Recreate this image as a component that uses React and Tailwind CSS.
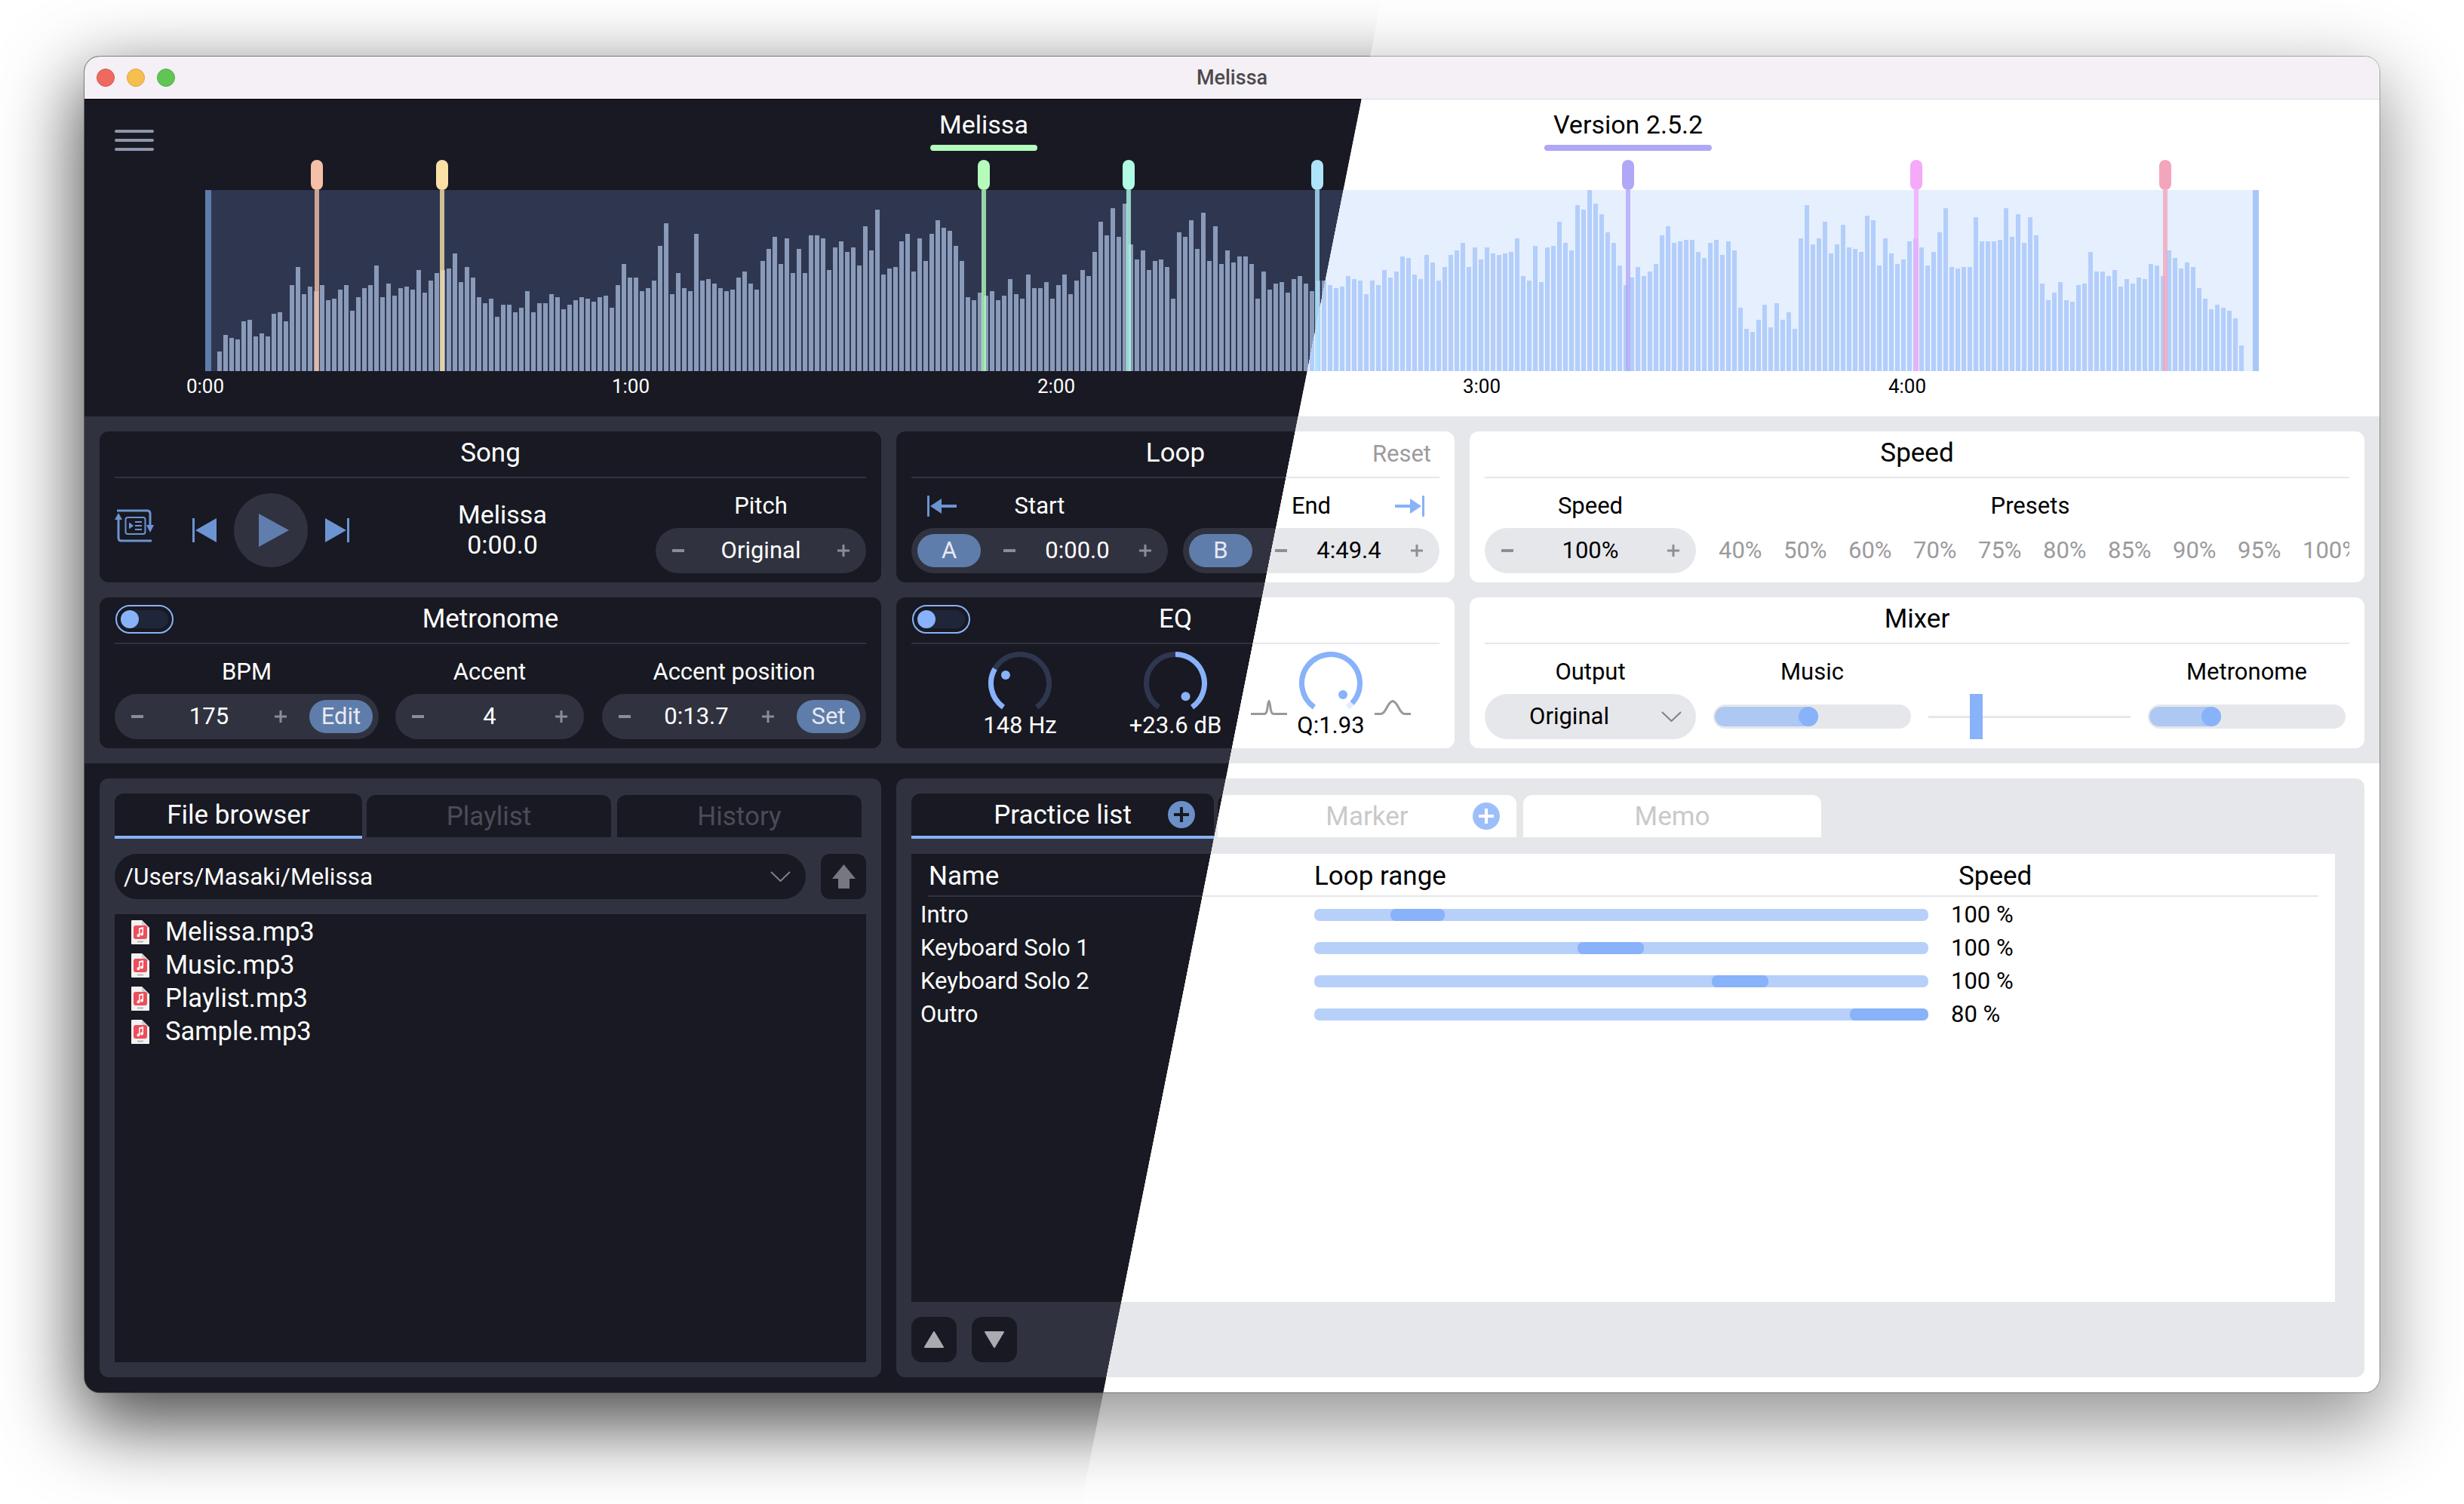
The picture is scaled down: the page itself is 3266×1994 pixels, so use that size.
import React from 'react';

const dark = {
  stage: 'shadow-[0_36px_100px_8px_rgba(0,0,0,0.7),0_0_0_1px_rgba(0,0,0,0.4)]',
  titleLine: 'border-[#000000]',
  base: 'bg-[#181922] text-white',
  inner: 'bg-[#181922]',
  section: 'bg-[#30323f]',
  rule: 'border-[#30323f]',
  burger: 'bg-[#8e96ab]',
  button: 'bg-[#5f7dab] text-[#e8e9ef]',
  mutedTab: 'text-[#4a4c58]',
  muted: 'text-[#77798a]',
  sign: '#8b8c94',
  icon: '#6c94d2',
  playBg: '#30323f',
  playFg: '#5f7eae',
  wave: '#2f3750',
  bar: '#8a9ab9',
  edge: '#5d7cad',
  track: '#2e3650',
  toggleTrack: 'bg-[#20263a]',
  addBg: '#6b8fc7',
  addFg: '#181922',
  upArrow: '#77777f',
  triangle: '#aaabb0',
};

const light = {
  stage: 'shadow-[0_36px_100px_8px_rgba(0,0,0,0.42),0_0_0_1px_rgba(0,0,0,0.28)]',
  titleLine: 'border-[#dcdcdf]',
  base: 'bg-white text-black',
  inner: 'bg-white',
  section: 'bg-[#e6e7eb]',
  rule: 'border-[#e6e7eb]',
  burger: 'bg-[#8e96ab]',
  button: 'bg-[#88b2f9] text-white',
  mutedTab: 'text-[#c9c9cb]',
  muted: 'text-[#9b9b9d]',
  sign: '#8f8f92',
  icon: '#88b2f9',
  playBg: '#e6e7eb',
  playFg: '#88b2f9',
  wave: '#e5effe',
  bar: '#b3cefa',
  edge: '#a8c7f8',
  track: '#e3edfd',
  toggleTrack: 'bg-[#e5effe]',
  addBg: '#9dbff9',
  addFg: '#ffffff',
  upArrow: '#999999',
  triangle: '#888888',
};

// bar heights of the waveform, one bar every 8px
const BARS = [
  26, 48, 44, 42, 66, 68, 46, 50, 46, 76, 78, 66, 114, 138, 102, 112, 106, 114, 94, 96, 108, 114, 80, 98, 110, 114, 140, 98, 116, 100,
  110, 112, 108, 134, 104, 120, 130, 134, 136, 156, 118, 138, 124, 98, 90, 96, 72, 88, 88, 78, 84, 106, 78, 90, 90, 102, 98, 82, 88, 94,
  98, 96, 92, 98, 100, 84, 114, 142, 124, 124, 106, 110, 120, 166,
  196, 102, 130, 110, 106, 182, 120, 122, 116, 110, 106, 108, 124, 132, 116, 108, 146, 162, 178, 142, 176, 130, 162, 130, 180, 180,
  176, 134, 164, 172, 158, 164, 140, 192, 160, 214, 128, 136, 138, 172, 182, 132, 176, 146, 182, 200, 190, 186, 166, 146, 98, 94, 104, 100, 106, 94,
  100, 122, 102, 96, 128, 110, 110, 118, 96, 114, 128, 102, 120, 134, 126, 158, 198, 180, 216, 178, 222, 168, 148,
  160, 134, 146, 148, 138, 96, 184, 178, 200, 162, 210, 146, 192, 142, 160, 144, 152, 152, 142, 96, 132, 108, 116, 118, 104, 122, 126, 116, 106, 120,
  120, 114, 110, 112, 126, 122, 120, 102, 120, 114, 134, 124, 132, 152, 150, 128, 122, 154, 144, 120, 138, 154, 160, 170, 138, 164, 148, 164, 156, 154,
  156, 158, 176, 126, 120, 166, 118, 164, 166, 198, 170, 160, 220, 214, 240, 222, 208, 184, 170, 140, 114, 124, 138, 126, 132, 142, 180, 192, 170, 172,
  174, 174, 158, 150, 170, 174, 154, 172, 160,
  84, 56, 52, 68, 88, 58, 90, 68, 78, 56, 176, 220, 168, 176, 198, 156, 168, 194, 164, 162, 158, 206, 200, 140, 176, 156, 142, 148, 172, 176,
  164, 140, 158, 184, 216, 138, 136, 138, 138, 204, 172, 172, 172, 174, 216, 178, 208, 170, 204, 180, 116, 94, 104, 118, 94, 92, 114, 116, 158, 132,
  132, 126, 134, 112, 122, 116, 124, 122, 142, 140, 126, 160, 150, 136, 144, 138, 110, 96, 82, 88, 84, 80, 70, 34,
];

const MARKERS = [
  { at: 420, handle: '#f5c0a7' },
  { at: 586, handle: '#f9e0a5' },
  { at: 1304, handle: '#b4fbbc', label: 'Melissa' },
  { at: 1496, handle: '#b0fbe4' },
  { at: 1746, handle: '#aee4fb' },
  { at: 2158, handle: '#b1a7f7', label: 'Version 2.5.2' },
  { at: 2540, handle: '#f4a9f9' },
  { at: 2870, handle: '#f3a5bc' },
];

const TICKS = ['0:00', '1:00', '2:00', '3:00', '4:00'];
const PRESETS = ['40%', '50%', '60%', '70%', '75%', '80%', '85%', '90%', '95%', '100%'];
const FILES = ['Melissa.mp3', 'Music.mp3', 'Playlist.mp3', 'Sample.mp3'];
const PRACTICE = [
  { name: 'Intro', left: 101, width: 72, speed: '100 %' },
  { name: 'Keyboard Solo 1', left: 349, width: 88, speed: '100 %' },
  { name: 'Keyboard Solo 2', left: 527, width: 75, speed: '100 %' },
  { name: 'Outro', left: 710, width: 104, speed: '80 %' },
];

function Minus({ t }) {
  return (
    <svg width="16" height="16" viewBox="0 0 16 16" className="shrink-0">
      <rect y="6" width="16" height="4" fill={t.sign} />
    </svg>
  );
}

function Plus({ t }) {
  return (
    <svg width="16" height="16" viewBox="0 0 16 16" className="shrink-0">
      <path d="M6.5 0h3v6.5H16v3H9.5V16h-3V9.5H0v-3h6.5z" fill={t.sign} />
    </svg>
  );
}

function Chevron({ stroke = '#808085' }) {
  return (
    <svg width="27" height="14" viewBox="0 0 27 14" className="shrink-0">
      <path d="M1 1l12.5 12L26 1" fill="none" stroke={stroke} strokeWidth="2" />
    </svg>
  );
}

function PillButton({ t, label }) {
  return (
    <div className={`flex h-[44px] w-[84px] shrink-0 items-center justify-center rounded-[22px] ${t.button}`}>{label}</div>
  );
}

function Stepper({ t, value, before, after }) {
  return (
    <div className={`flex h-[60px] items-center rounded-[30px] ${t.section} ${before ? 'pl-[8px]' : 'pl-[22px]'} ${after ? 'pr-[8px]' : 'pr-[22px]'}`}>
      {before && <div className="mr-[30px]">{before}</div>}
      <Minus t={t} />
      <div className="flex-1 text-center">{value}</div>
      <Plus t={t} />
      {after && <div className="ml-[30px]">{after}</div>}
    </div>
  );
}

function Toggle({ t }) {
  return (
    <div className="ml-[1px] flex h-[38px] w-[77px] items-center rounded-full border-2 border-[#88b2f9] p-[5px]">
      <div className={`h-[24px] w-full rounded-full ${t.toggleTrack}`}>
        <div className="h-[24px] w-[24px] rounded-full bg-[#88b2f9]" />
      </div>
    </div>
  );
}

function Panel({ t, title, left, right, children }) {
  return (
    <div className={`h-[200px] rounded-[12px] px-[20px] ${t.inner}`}>
      <div className={`grid h-[62px] grid-cols-[1fr_auto_1fr] items-center border-b-2 pb-[2px] text-[35px] ${t.rule}`}>
        <div>{left}</div>
        <div className="text-center">{title}</div>
        <div className="text-right">{right}</div>
      </div>
      {children}
    </div>
  );
}

function Field({ label, className, children }) {
  return (
    <div className={`pt-[19px] ${className}`}>
      <div className="mb-[11px] h-[36px] text-center leading-[36px]">{label}</div>
      {children}
    </div>
  );
}

function RepeatIcon({ color }) {
  return (
    <svg width="54" height="44" viewBox="0 0 54 44" className="mb-[12px] shrink-0">
      <path d="M3 2h40q4 0 4 4v16M5 12v26q0 4 4 4h40" fill="none" stroke={color} strokeWidth="3" />
      <path d="M0 14l5-9 5 9zM42 21h10l-5 10z" fill={color} />
      <rect x="14.5" y="11" width="26" height="22" rx="3" fill="none" stroke={color} strokeWidth="2" />
      <path d="M19 17.5l6 4.5-6 4.5z" fill={color} />
      <path d="M27 17h9M27 22h9M27 27h9" stroke={color} strokeWidth="2" />
    </svg>
  );
}

function SkipIcon({ color, flip }) {
  return (
    <svg width="32" height="32" viewBox="0 0 32 32" className={`shrink-0 ${flip ? '-scale-x-100' : ''}`}>
      <rect width="3" height="32" fill={color} />
      <path d="M32 0v32L4 16z" fill={color} />
    </svg>
  );
}

function SongPanel({ t }) {
  return (
    <Panel t={t} title="Song">
      <div className="flex h-[138px] items-center">
        <RepeatIcon color={t.icon} />
        <div className="ml-[49px] flex items-center">
          <SkipIcon color={t.icon} />
          <div className="mx-[23px] flex h-[98px] w-[98px] items-center justify-center rounded-full" style={{ background: t.playBg }}>
            <svg width="40" height="44" viewBox="0 0 40 44" className="ml-[8px]">
              <path d="M0 0l40 22L0 44z" fill={t.playFg} />
            </svg>
          </div>
          <SkipIcon color={t.icon} flip />
        </div>
        <div className="flex-1 pb-[2px] text-center text-[34px] leading-[40px]">
          <div>Melissa</div>
          <div>0:00.0</div>
        </div>
        <Field label="Pitch" className="w-[279px] self-start">
          <Stepper t={t} value="Original" />
        </Field>
      </div>
    </Panel>
  );
}

function MetronomePanel({ t }) {
  return (
    <Panel t={t} title="Metronome" left={<Toggle t={t} />}>
      <div className="flex">
        <Field label="BPM" className="w-[350px]">
          <Stepper t={t} value="175" after={<PillButton t={t} label="Edit" />} />
        </Field>
        <Field label="Accent" className="ml-[22px] w-[250px]">
          <Stepper t={t} value="4" />
        </Field>
        <Field label="Accent position" className="ml-[24px] w-[350px]">
          <Stepper t={t} value="0:13.7" after={<PillButton t={t} label="Set" />} />
        </Field>
      </div>
    </Panel>
  );
}

function LoopEndIcon({ color, flip }) {
  return (
    <svg width="39" height="28" viewBox="0 0 39 28" className={`block ${flip ? '-scale-x-100' : ''}`}>
      <rect width="3" height="28" rx="1" fill={color} />
      <path d="M4 14l15-10v8h20v4H19v8z" fill={color} />
    </svg>
  );
}

function LoopPanel({ t }) {
  return (
    <Panel t={t} title="Loop" right={<span className={`pr-[11px] text-[31px] ${t.muted}`}>Reset</span>}>
      <div className="flex gap-[20px]">
        <div className="w-[340px] pt-[19px]">
          <div className="mb-[11px] grid h-[36px] grid-cols-[1fr_auto_1fr] items-center leading-[36px]">
            <div className="pl-[21px]"><LoopEndIcon color={t.icon} /></div>
            <div>Start</div>
            <div />
          </div>
          <Stepper t={t} value="0:00.0" before={<PillButton t={t} label="A" />} />
        </div>
        <div className="w-[340px] pt-[19px]">
          <div className="mb-[11px] grid h-[36px] grid-cols-[1fr_auto_1fr] items-center leading-[36px]">
            <div />
            <div>End</div>
            <div className="flex justify-end pr-[20px]"><LoopEndIcon color={t.icon} flip /></div>
          </div>
          <Stepper t={t} value="4:49.4" before={<PillButton t={t} label="B" />} />
        </div>
      </div>
    </Panel>
  );
}

function polar(angle) {
  const rad = (angle * Math.PI) / 180;
  return [42 + 38.5 * Math.sin(rad), 42 - 38.5 * Math.cos(rad)];
}

function arc(from, to) {
  const [x0, y0] = polar(from);
  const [x1, y1] = polar(to);
  return `M${x0} ${y0}A38.5 38.5 0 ${to - from > 180 ? 1 : 0} 1 ${x1} ${y1}`;
}

function Knob({ t, from, to, dot }) {
  const rad = (dot * Math.PI) / 180;
  return (
    <svg width="84" height="84" viewBox="0 0 84 84" className="shrink-0">
      <path d={arc(-145, 145)} fill="none" stroke={t.track} strokeWidth="7" />
      <path d={arc(from, to)} fill="none" stroke="#88b2f9" strokeWidth="7" />
      <circle cx={42 + 22 * Math.sin(rad)} cy={42 - 22 * Math.cos(rad)} r="6" fill="#88b2f9" />
    </svg>
  );
}

function FilterShape({ narrow }) {
  return (
    <svg width="48" height="20" viewBox="0 0 48 20" className="shrink-0 self-end">
      <path
        d={narrow ? 'M0 18.5h18q3 0 4-8t2-9q1 1 2 9t4 8h18' : 'M0 18.5h8q4 0 8-8t8-9q4 1 8 9t8 8h8'}
        fill="none"
        stroke="#999999"
        strokeWidth="3"
      />
    </svg>
  );
}

function EqPanel({ t }) {
  return (
    <Panel t={t} title="EQ" left={<Toggle t={t} />}>
      <div className="flex justify-center pt-[10px]">
        <div className="flex w-[206px] flex-col items-center">
          <Knob t={t} from={-145} to={-60} dot={-60} />
          <div className="-mt-[4px] leading-[36px]">148 Hz</div>
        </div>
        <div className="flex w-[206px] flex-col items-center">
          <Knob t={t} from={0} to={145} dot={142} />
          <div className="-mt-[4px] leading-[36px]">+23.6 dB</div>
        </div>
        <div className="flex w-[206px] flex-col items-center">
          <div className="-mx-[3px] flex gap-[16px]">
            <FilterShape narrow />
            <Knob t={t} from={-145} to={133} dot={133} />
            <FilterShape />
          </div>
          <div className="-mt-[4px] leading-[36px]">Q:1.93</div>
        </div>
      </div>
    </Panel>
  );
}

function SpeedPanel({ t }) {
  return (
    <Panel t={t} title="Speed">
      <div className="flex gap-[20px]">
        <Field label="Speed" className="w-[280px]">
          <Stepper t={t} value="100%" />
        </Field>
        <Field label="Presets" className="min-w-0 flex-1">
          <div className={`flex h-[60px] items-center gap-[29px] overflow-hidden pl-[10px] ${t.muted}`}>
            {PRESETS.map((p) => (
              <div key={p} className="w-[57px] shrink-0 whitespace-nowrap">{p}</div>
            ))}
          </div>
        </Field>
      </div>
    </Panel>
  );
}

function Fader({ t, fill }) {
  return (
    <div className={`flex h-[32px] items-center rounded-full px-[2px] ${t.section}`}>
      <div className={`flex h-[26px] justify-end rounded-full bg-[#adc8f2] ${fill}`}>
        <div className="h-[26px] w-[26px] rounded-full bg-[#88b2f9]" />
      </div>
    </div>
  );
}

function MixerPanel({ t }) {
  return (
    <Panel t={t} title="Mixer">
      <div className="flex gap-[23px]">
        <Field label="Output" className="w-[280px]">
          <div className={`flex h-[60px] items-center rounded-[30px] ${t.section}`}>
            <div className="flex-1 text-center">Original</div>
            <div className="ml-[10px] mr-[19px]"><Chevron /></div>
          </div>
        </Field>
        <Field label="Music" className="w-[262px]">
          <div className="flex h-[60px] items-center"><div className="w-full"><Fader t={t} fill="w-[137px]" /></div></div>
        </Field>
        <div className="relative mt-[66px] flex h-[60px] w-[268px] items-center">
          <div className={`h-[3px] w-full ${t.section}`} />
          <div className="absolute left-[55px] top-0 h-[60px] w-[17px] bg-[#88b2f9]" />
        </div>
        <Field label="Metronome" className="w-[262px]">
          <div className="flex h-[60px] items-center"><div className="w-full"><Fader t={t} fill="w-[95px]" /></div></div>
        </Field>
      </div>
    </Panel>
  );
}

function Tab({ t, label, active, width, addAt }) {
  return (
    <div
      className={`relative flex h-[56px] items-center justify-center rounded-t-[12px] text-[35px] ${width} ${t.inner} ${
        active ? 'box-content border-b-4 border-[#88b2f9]' : `mt-[2px] ${t.mutedTab}`
      }`}
    >
      <span className="mt-[2px]">{label}</span>
      {addAt && (
        <svg width="36" height="36" viewBox="0 0 36 36" className={`absolute ${addAt}`}>
          <circle cx="18" cy="18" r="18" fill={t.addBg} />
          <path d="M18 8v20M8 18h20" stroke={t.addFg} strokeWidth="4" />
        </svg>
      )}
    </div>
  );
}

function FileIcon() {
  return (
    <svg width="24" height="32" viewBox="0 0 24 32" className="shrink-0">
      <path d="M0 1q0-1 1-1h13l10 10v21q0 1-1 1H1q-1 0-1-1z" fill="#f2f2f2" />
      <path d="M14 0l10 10H14z" fill="#cfcfcf" />
      <rect x="3" y="7" width="18" height="18" rx="3" fill="#ee4d5a" />
      <path d="M10 10.5l6-1.5v9.5a2 2 0 1 1-1.5-2V11.5l-3 .8v8a2 2 0 1 1-1.5-2z" fill="#ffffff" />
      <rect x="8" y="27.5" width="8" height="2" fill="#b5b5b5" />
    </svg>
  );
}

function FilePanel({ t }) {
  return (
    <div className={`flex w-[1036px] flex-col rounded-[12px] p-[20px] ${t.section}`}>
      <div className="flex h-[60px] items-start">
        <Tab t={t} label="File browser" active width="w-[328px]" />
        <div className="ml-[6px]"><Tab t={t} label="Playlist" width="w-[324px]" /></div>
        <div className="ml-[8px]"><Tab t={t} label="History" width="w-[324px]" /></div>
      </div>
      <div className="mt-[20px] flex h-[60px] gap-[20px]">
        <div className={`flex flex-1 items-center rounded-[30px] pl-[12px] pr-[20px] text-[31.5px] ${t.inner}`}>
          <div className="flex-1 pt-[2px]">/Users/Masaki/Melissa</div>
          <Chevron />
        </div>
        <div className={`flex w-[60px] items-center justify-center rounded-[12px] ${t.inner}`}>
          <svg width="31" height="32" viewBox="0 0 31 32">
            <path d="M15.5 0L31 19h-8v13H8V19H0z" fill={t.upArrow} />
          </svg>
        </div>
      </div>
      <div className={`mt-[20px] flex-1 pl-[22px] pt-[2px] text-[34.5px] ${t.inner}`}>
        {FILES.map((f) => (
          <div key={f} className="flex h-[44px] items-center gap-[21px]">
            <FileIcon />
            <div>{f}</div>
          </div>
        ))}
      </div>
    </div>
  );
}

function Triangle({ t, down }) {
  return (
    <svg width="28" height="24" viewBox="0 0 28 24" className={down ? 'rotate-180' : ''}>
      <path d="M14 2L26 22H2z" fill={t.triangle} stroke={t.triangle} strokeWidth="2" strokeLinejoin="round" />
    </svg>
  );
}

function PracticePanel({ t }) {
  return (
    <div className={`flex flex-1 flex-col rounded-[12px] p-[20px] ${t.section}`}>
      <div className="flex h-[60px] items-start">
        <Tab t={t} label="Practice list" active addAt="right-[25px] top-[10px]" width="w-[401px]" />
        <div className="ml-[5px]"><Tab t={t} label="Marker" addAt="right-[22px] top-[10px]" width="w-[396px]" /></div>
        <div className="ml-[9px]"><Tab t={t} label="Memo" width="w-[395px]" /></div>
      </div>
      <div className={`mt-[20px] w-[1887px] flex-1 ${t.inner}`}>
        <div className={`mx-[22px] flex h-[57px] border-b-2 pl-[1px] pt-[12px] text-[35px] leading-[36px] ${t.rule}`}>
          <div className="w-[511px]">Name</div>
          <div className="w-[854px]">Loop range</div>
          <div>Speed</div>
        </div>
        <div className="mt-[2px] pl-[12px]">
          {PRACTICE.map((row) => (
            <div key={row.name} className="flex h-[44px] items-center">
              <div className="w-[522px]">{row.name}</div>
              <div className="relative h-[16px] w-[814px] overflow-hidden rounded-[7px] bg-[#b7d0f9]">
                <div className="absolute top-0 h-[16px] rounded-[7px] bg-[#88b2f9]" style={{ left: row.left, width: row.width }} />
              </div>
              <div className="ml-[30px]">{row.speed}</div>
            </div>
          ))}
        </div>
      </div>
      <div className="mt-[20px] flex h-[60px] gap-[20px]">
        <div className={`flex w-[60px] items-center justify-center rounded-[14px] ${t.inner}`}><Triangle t={t} /></div>
        <div className={`flex w-[60px] items-center justify-center rounded-[14px] ${t.inner}`}><Triangle t={t} down /></div>
      </div>
    </div>
  );
}

function Marker({ at, handle, label }) {
  return (
    <div className="absolute top-[-40px] flex w-[16px] flex-col items-center" style={{ left: at - 280 }}>
      {label && (
        <div className="absolute bottom-full left-1/2 mb-[12px] flex -translate-x-1/2 flex-col whitespace-nowrap">
          <div className="h-[36px] px-[12px] text-center text-[34px] leading-[36px]">{label}</div>
          <div className="mt-[9px] h-[8px] rounded-[4px]" style={{ background: handle }} />
        </div>
      )}
      <div className="h-[40px] w-[16px] rounded-full" style={{ background: handle }} />
      <div className="h-[240px] w-[6px] opacity-80" style={{ background: handle }} />
    </div>
  );
}

function WaveHeader({ t }) {
  return (
    <div className="flex h-[420px]">
      <div className="flex h-fit w-[160px] flex-col gap-[8px] pl-[40px] pt-[40px]">
        <div className={`h-[4px] w-[52px] rounded-full ${t.burger}`} />
        <div className={`h-[4px] w-[52px] rounded-full ${t.burger}`} />
        <div className={`h-[4px] w-[52px] rounded-full ${t.burger}`} />
      </div>
      <div className="relative mt-[120px] h-[240px] w-[2722px]">
        <svg width="2722" height="240" viewBox="0 0 2722 240" className="block" style={{ background: t.wave }}>
          <rect width="8" height="240" fill={t.edge} />
          <rect x="2714" width="8" height="240" fill={t.edge} />
          {BARS.map((h, i) => (
            <rect key={i} x={16 + i * 8} y={240 - h} width="6" height={h} fill={t.bar} />
          ))}
        </svg>
        {MARKERS.map((m) => (
          <Marker key={m.at} {...m} />
        ))}
        {TICKS.map((label, i) => (
          <div key={label} className="absolute top-[240px] -translate-x-1/2 text-[26px] leading-[40px]" style={{ left: i * 564 }}>
            {label}
          </div>
        ))}
      </div>
    </div>
  );
}

function AppWindow({ t }) {
  return (
    <div className={`flex h-[1771px] w-[3042px] flex-col overflow-hidden rounded-[20px] ${t.base} ${t.stage}`}>
      <div className={`relative flex h-[57px] shrink-0 items-center justify-center border-b bg-[#f5eff6] ${t.titleLine}`}>
        <div className="absolute left-[16px] top-[16px] flex gap-[16px]">
          <div className="h-[24px] w-[24px] rounded-full border border-[#d9534a] bg-[#ee6a5f]" />
          <div className="h-[24px] w-[24px] rounded-full border border-[#dca13c] bg-[#f5bf4f]" />
          <div className="h-[24px] w-[24px] rounded-full border border-[#4fae44] bg-[#61c554]" />
        </div>
        <div className="text-[27px] font-medium text-[#4b4b4b]">Melissa</div>
      </div>
      <WaveHeader t={t} />
      <div className={`flex h-[460px] shrink-0 gap-[20px] p-[20px] ${t.section}`}>
        <div className="flex w-[1036px] flex-col gap-[20px]">
          <SongPanel t={t} />
          <MetronomePanel t={t} />
        </div>
        <div className="flex w-[740px] flex-col gap-[20px]">
          <LoopPanel t={t} />
          <EqPanel t={t} />
        </div>
        <div className="flex flex-1 flex-col gap-[20px]">
          <SpeedPanel t={t} />
          <MixerPanel t={t} />
        </div>
      </div>
      <div className="flex min-h-0 flex-1 gap-[20px] p-[20px]">
        <FilePanel t={t} />
        <PracticePanel t={t} />
      </div>
    </div>
  );
}

export default function App() {
  return (
    <div className="relative h-[1994px] w-[3266px] overflow-hidden bg-white font-['Roboto',sans-serif] text-[31px]">
      <div className="pl-[112px] pt-[75px]">
        <AppWindow t={dark} />
      </div>
      {/* light theme on top, cut along the slanted line */}
      <div className="absolute inset-0 bg-white pl-[112px] pt-[75px] [clip-path:polygon(1831px_0,100%_0,100%_100%,1433px_100%)]">
        <AppWindow t={light} />
      </div>
    </div>
  );
}
